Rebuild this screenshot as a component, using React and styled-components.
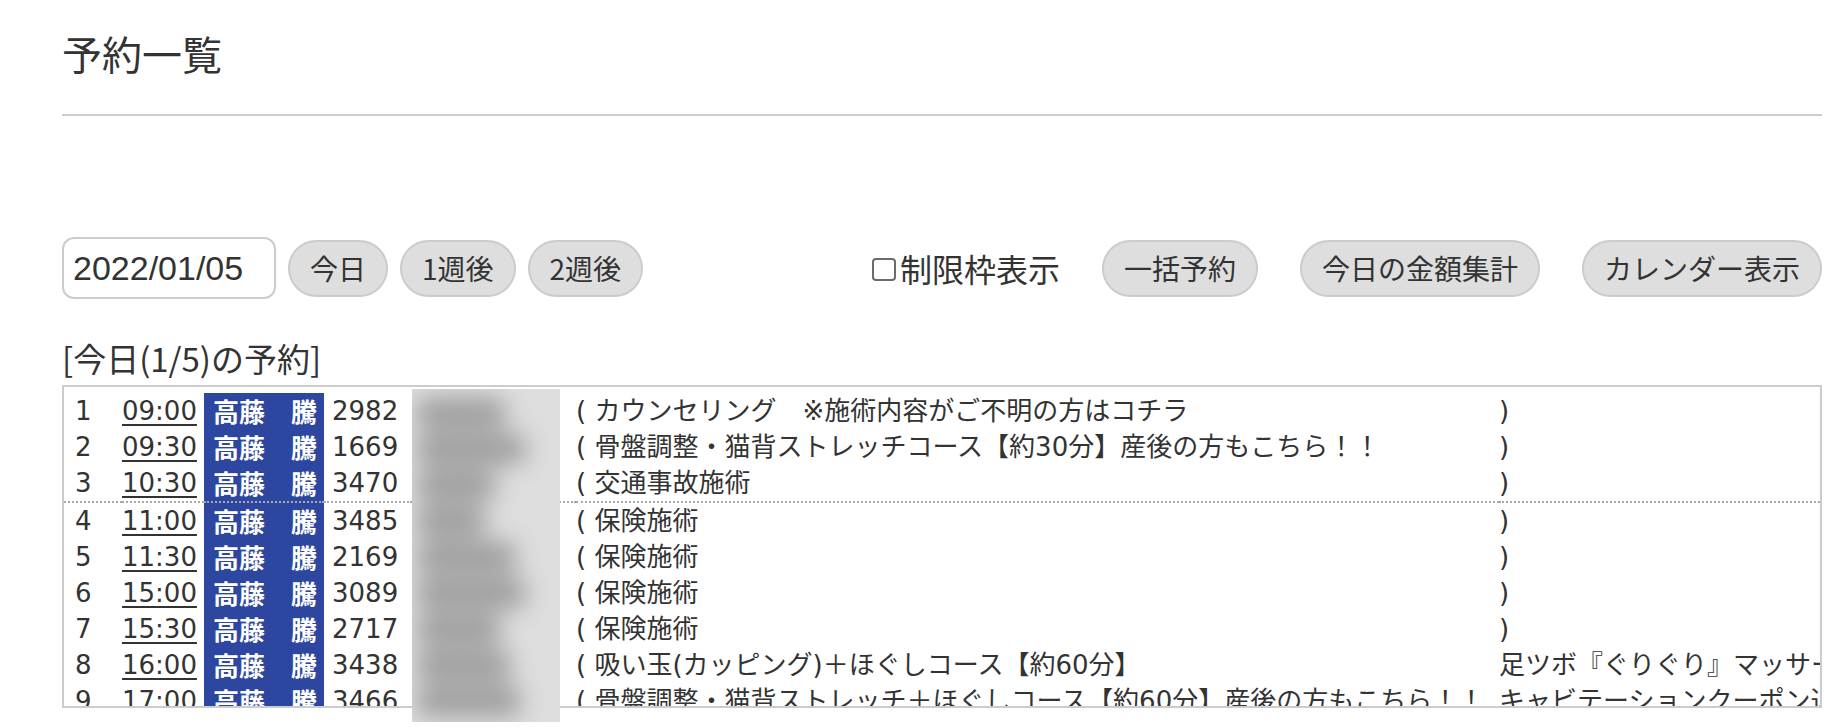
import React from 'react'
import styled, { createGlobalStyle, css } from 'styled-components'

const GlobalStyle = createGlobalStyle`
  body {
    margin: 0;
    background: #fff;
    color: #333;
    font-family: "Noto Sans CJK JP", sans-serif;
  }
`

const Page = styled.div`
  min-height: 100vh;
  box-sizing: border-box;
  padding: 0 26px 0 62px;
`

const Title = styled.h1`
  margin: 25px 0 0;
  font-size: 40px;
  font-weight: 400;
  line-height: 56px;
`

const Rule = styled.hr`
  margin: 33px 0 0;
  border: none;
  border-top: 2px solid #ccc;
`

const Toolbar = styled.div`
  display: flex;
  justify-content: space-between;
  align-items: center;
  margin-top: 121px;
`

const Group = styled.div`
  display: flex;
  align-items: center;
  gap: ${p => p.$gap}px;
`

const DateInput = styled.input`
  width: 214px;
  height: 62px;
  box-sizing: border-box;
  border: 2px solid #ccc;
  border-radius: 12px;
  padding: 0 9px;
  font-family: "Liberation Sans", sans-serif;
  font-size: 34px;
  color: #333;
  outline: none;
`

const Button = styled.button`
  height: 57px;
  padding: 0 20px;
  border: 2px solid #ccc;
  border-radius: 29px;
  background: #dedede;
  font-family: "Noto Sans CJK JP", sans-serif;
  font-size: 28px;
  color: #333;
`

const CheckLabel = styled.label`
  display: flex;
  align-items: center;
  flex: none;
  font-size: 32px;
  line-height: 44px;
`

const Check = styled.span`
  flex: 0 0 24px;
  display: block;
  width: 24px;
  height: 23px;
  box-sizing: border-box;
  margin: 2px 4px 0 0;
  border: 2px solid #6b6b6b;
  border-radius: 4px;
  background: #fff;
`

const SectionLabel = styled.div`
  margin-top: 37px;
  font-size: 33px;
  line-height: 44px;
`

const ListWrap = styled.div`
  position: relative;
  margin-top: 5px;
`

const ListBox = styled.div`
  height: 323px;
  box-sizing: border-box;
  border: 2px solid #ccc;
  overflow: hidden;
  padding-top: 6px;
  font-family: "DejaVu Sans", "Noto Sans CJK JP", sans-serif;
  font-size: 26px;
  color: #333;
`

const Row = styled.div`
  display: flex;
  white-space: nowrap;
  line-height: 36px;
  ${p => p.$divider && css`
    & > * {
      border-top: 2px dotted #aaa;
    }
  `}
`

const No = styled.span`
  flex: none;
  width: 58px;
  box-sizing: border-box;
  padding-left: 11px;
`

const Time = styled.span`
  flex: none;
  width: 82px;

  a {
    color: inherit;
    text-decoration: underline;
    text-decoration-thickness: 2px;
    text-underline-offset: 4px;
  }
`

const Staff = styled.span`
  flex: none;
  width: 120px;
  box-sizing: border-box;
  padding-left: 9px;
  background: #2d47a1;
  color: #fff;
  font-family: "Noto Sans CJK JP", sans-serif;
  font-weight: 700;
`

const Code = styled.span`
  flex: none;
  width: 88px;
  box-sizing: border-box;
  padding-left: 8px;
`

const Client = styled.span`
  flex: none;
  width: 164px;
`

const Course = styled.span`
  flex: none;
  width: 923px;
`

const Option = styled.span`
  flex: 1 1 auto;
  min-width: 0;
  overflow: hidden;
`

const Censor = styled.div`
  position: absolute;
  z-index: 2;
  left: 350px;
  top: 4px;
  width: 148px;
  height: 333px;
  overflow: hidden;
  background: #dedede;
`

const Smears = styled.div`
  display: flex;
  flex-direction: column;
  padding-top: 6px;
  filter: blur(12px);
`

const Smear = styled.div`
  height: 36px;
  display: flex;
  align-items: center;

  &::before {
    content: "";
    display: block;
    height: 30px;
    margin-left: 4px;
    border-radius: 12px;
    background: #9c9c9c;
    width: var(--w);
  }
`

const rows = [
  { time: '09:00', code: '2982', course: 'カウンセリング　※施術内容がご不明の方はコチラ', option: '', w: 90 },
  { time: '09:30', code: '1669', course: '骨盤調整・猫背ストレッチコース【約30分】産後の方もこちら！！', option: '', w: 110 },
  { time: '10:30', code: '3470', course: '交通事故施術', option: '', w: 80 },
  { time: '11:00', code: '3485', course: '保険施術', option: '', w: 70 },
  { time: '11:30', code: '2169', course: '保険施術', option: '', w: 100 },
  { time: '15:00', code: '3089', course: '保険施術', option: '', w: 110 },
  { time: '15:30', code: '2717', course: '保険施術', option: '', w: 85 },
  { time: '16:00', code: '3438', course: '吸い玉(カッピング)＋ほぐしコース【約60分】', option: '足ツボ『ぐりぐり』マッサージ', w: 95 },
  { time: '17:00', code: '3466', course: '骨盤調整・猫背ストレッチ＋ほぐしコース【約60分】産後の方もこちら！！', option: 'キャビテーションクーポン込み', w: 105 },
]

export default function App() {
  return (
    <Page>
      <GlobalStyle />
      <Title>予約一覧</Title>
      <Rule />

      <Toolbar>
        <Group $gap={12}>
          <DateInput type="text" defaultValue="2022/01/05" />
          <Button type="button">今日</Button>
          <Button type="button">1週後</Button>
          <Button type="button">2週後</Button>
        </Group>
        <Group $gap={42}>
          <CheckLabel>
            <Check role="checkbox" aria-checked="false" />
            制限枠表示
          </CheckLabel>
          <Button type="button">一括予約</Button>
          <Button type="button">今日の金額集計</Button>
          <Button type="button">カレンダー表示</Button>
        </Group>
      </Toolbar>

      <SectionLabel>[今日(1/5)の予約]</SectionLabel>

      <ListWrap>
        <ListBox>
          {rows.map((r, i) => (
            <Row key={r.time} $divider={i === 3}>
              <No>{i + 1}</No>
              <Time><a href="#">{r.time}</a></Time>
              <Staff>高藤　騰</Staff>
              <Code>{r.code}</Code>
              <Client />
              <Course>( {r.course}</Course>
              <Option>{r.option}{r.option ? ' ' : ''})</Option>
            </Row>
          ))}
        </ListBox>
        <Censor>
          <Smears>
            {rows.map(r => (
              <Smear key={r.time} style={{ '--w': r.w + 'px' }} />
            ))}
          </Smears>
        </Censor>
      </ListWrap>
    </Page>
  )
}
